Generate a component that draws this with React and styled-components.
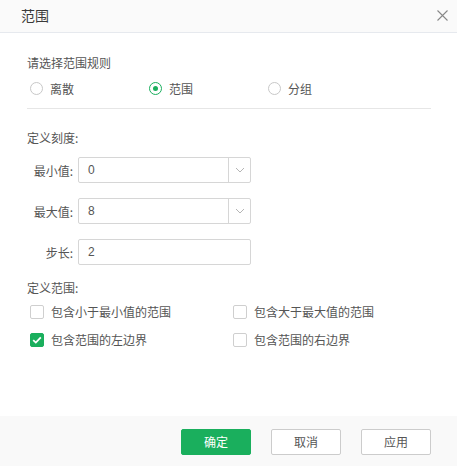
import React from "react";
import styled, { createGlobalStyle } from "styled-components";

const Global = createGlobalStyle`
  html, body { margin: 0; padding: 0; background: #fff; }
  body { font-family: "Noto Sans CJK SC", "Noto Sans", sans-serif; }
  * { box-sizing: border-box; }
`;

const Dialog = styled.div`
  width: 457px;
  height: 466px;
  display: flex;
  flex-direction: column;
  background: #fff;
  color: #333;
  font-size: 12px;
`;

const Header = styled.div`
  height: 33px;
  flex: none;
  display: flex;
  align-items: center;
  justify-content: space-between;
  padding: 0 9px 0 21px;
  background: #fafafa;
  border-bottom: 1px solid #e6e9ee;
`;

const Title = styled.div`
  font-size: 14px;
  color: #3a3a3a;
  line-height: 20px;
  margin-top: -2px;
`;

const Close = styled.button`
  width: 12px;
  height: 12px;
  padding: 0;
  border: 0;
  background: none;
  display: flex;
  align-items: center;
  justify-content: center;
  margin-top: -2px;
`;

const Body = styled.div`
  flex: 1;
  padding: 16px 26px 0 27px;
`;

const SectionLabel = styled.div`
  font-size: 12px;
  line-height: 17px;
  color: #555;
  margin-top: ${(p) => p.$mt || 0}px;
`;

const RadioRow = styled.div`
  display: flex;
  padding-left: 3px;
  margin-top: 8px;
  height: 19px;
  align-items: center;
`;

const RadioItem = styled.label`
  width: 119px;
  display: flex;
  align-items: center;
  gap: 7px;
  font-size: 12px;
  color: #555;
`;

const RadioCircle = styled.span`
  width: 13px;
  height: 13px;
  border-radius: 50%;
  border: 1px solid ${(p) => (p.$on ? "#1aaf5d" : "#c8c8c8")};
  display: flex;
  align-items: center;
  justify-content: center;
  flex: none;
  &::after {
    content: "";
    width: 5px;
    height: 5px;
    border-radius: 50%;
    background: ${(p) => (p.$on ? "#1aaf5d" : "transparent")};
  }
`;

const Divider = styled.div`
  height: 1px;
  background: #e6e6e6;
  margin-top: 10px;
`;

const FieldRow = styled.div`
  display: flex;
  align-items: center;
  margin-top: ${(p) => p.$mt}px;
`;

const FieldLabel = styled.div`
  width: 46px;
  text-align: right;
  color: #555;
  font-size: 12px;
  margin-right: 5px;
`;

const Input = styled.div`
  width: 173px;
  height: 26px;
  border: 1px solid #d6d6d6;
  border-radius: 2px;
  display: flex;
  align-items: center;
  color: #555;
  font-family: "Liberation Sans", "Noto Sans CJK SC", sans-serif;
  font-size: 12px;
`;

const InputValue = styled.div`
  flex: 1;
  padding-left: 9px;
`;

const Caret = styled.div`
  width: 22px;
  height: 100%;
  border-left: 1px solid #d6d6d6;
  display: flex;
  align-items: center;
  justify-content: center;
`;

const CheckGrid = styled.div`
  display: grid;
  grid-template-columns: 203px 1fr;
  row-gap: 9px;
  padding-left: 3px;
  margin-top: 6px;
`;

const CheckItem = styled.label`
  display: flex;
  align-items: center;
  gap: 7px;
  height: 19px;
  color: #555;
  font-size: 12px;
`;

const Box = styled.span`
  width: 14px;
  height: 14px;
  border-radius: 2px;
  flex: none;
  border: 1px solid ${(p) => (p.$on ? "#1aaf5d" : "#cfcfcf")};
  background: ${(p) => (p.$on ? "#1aaf5d" : "#fff")};
  display: flex;
  align-items: center;
  justify-content: center;
`;

const Footer = styled.div`
  height: 50px;
  flex: none;
  background: #f9f9f9;
  display: flex;
  align-items: center;
  justify-content: flex-end;
  gap: 20px;
  padding-right: 26px;
`;

const Btn = styled.button`
  width: 70px;
  height: 26px;
  border-radius: 2px;
  font-family: "Noto Sans CJK SC", sans-serif;
  font-size: 12px;
  padding: 0;
  border: 1px solid ${(p) => (p.$primary ? "#1aaf5d" : "#cccccc")};
  background: ${(p) => (p.$primary ? "#1aaf5d" : "#fff")};
  color: ${(p) => (p.$primary ? "#fff" : "#555")};
  margin-top: 1px;
`;

const ChevronDown = () => (
  <svg width="10" height="6" viewBox="0 0 10 6">
    <path d="M1 1l4 4 4-4" fill="none" stroke="#b5b5b5" strokeWidth="1" />
  </svg>
);

const Field = ({ label, value, select, mt }) => (
  <FieldRow $mt={mt}>
    <FieldLabel>{label}</FieldLabel>
    <Input>
      <InputValue>{value}</InputValue>
      {select && (
        <Caret>
          <ChevronDown />
        </Caret>
      )}
    </Input>
  </FieldRow>
);

const Check = ({ on, children }) => (
  <CheckItem>
    <Box $on={on}>
      {on && (
        <svg width="10" height="8" viewBox="0 0 10 8">
          <path d="M1.2 4.2l2.6 2.4L8.8 1.4" fill="none" stroke="#fff" strokeWidth="1.8" />
        </svg>
      )}
    </Box>
    {children}
  </CheckItem>
);

export default function App() {
  return (
    <>
      <Global />
      <Dialog>
        <Header>
          <Title>范围</Title>
          <Close aria-label="关闭">
            <svg width="11" height="11" viewBox="0 0 11 11">
              <path d="M0.5 0.5l10 10M10.5 0.5l-10 10" stroke="#888" strokeWidth="1.1" />
            </svg>
          </Close>
        </Header>
        <Body>
          <SectionLabel $mt={5}>请选择范围规则</SectionLabel>
          <RadioRow>
            <RadioItem>
              <RadioCircle />
              离散
            </RadioItem>
            <RadioItem>
              <RadioCircle $on />
              范围
            </RadioItem>
            <RadioItem>
              <RadioCircle />
              分组
            </RadioItem>
          </RadioRow>
          <Divider />
          <SectionLabel $mt={20}>定义刻度:</SectionLabel>
          <Field label="最小值:" value="0" select mt={11} />
          <Field label="最大值:" value="8" select mt={15} />
          <Field label="步长:" value="2" mt={15} />
          <SectionLabel $mt={14}>定义范围:</SectionLabel>
          <CheckGrid>
            <Check>包含小于最小值的范围</Check>
            <Check>包含大于最大值的范围</Check>
            <Check on>包含范围的左边界</Check>
            <Check>包含范围的右边界</Check>
          </CheckGrid>
        </Body>
        <Footer>
          <Btn $primary>确定</Btn>
          <Btn>取消</Btn>
          <Btn>应用</Btn>
        </Footer>
      </Dialog>
    </>
  );
}
